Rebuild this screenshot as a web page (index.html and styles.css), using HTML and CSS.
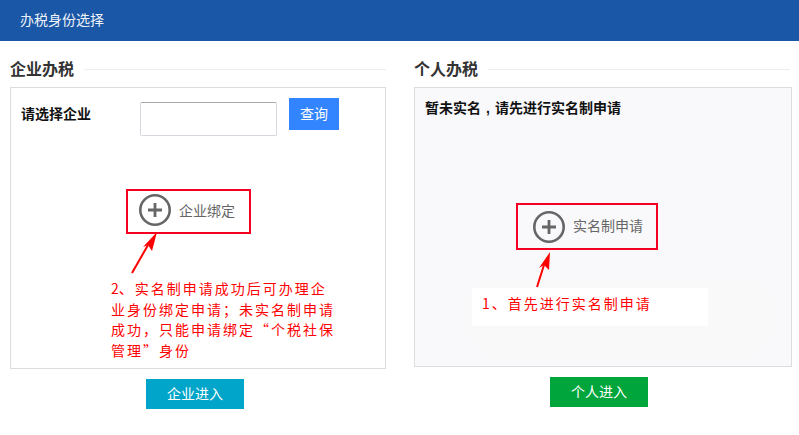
FILE: index.html
```html
<!DOCTYPE html>
<html lang="zh-CN">
<head>
    <meta charset="UTF-8">
    <title>办税身份选择</title>
    <link rel="stylesheet" href="styles.css">
</head>
<body>
    <div class="header">办税身份选择</div>

    <div class="columns">
        <!-- 企业办税 -->
        <div class="column column-company">
            <div class="section-title"><span class="title-text">企业办税</span><i class="title-line"></i></div>
            <div class="panel panel-company">
                <div class="query-row">
                    <label class="query-label">请选择企业</label>
                    <input class="query-input" type="text">
                    <div class="query-button">查询</div>
                </div>
                <div class="bind-box bind-company">
                    <svg class="plus-icon" width="34" height="34" viewBox="0 0 34 34">
                        <circle cx="17" cy="17" r="14.7" fill="none" stroke="#666" stroke-width="2.6"/>
                        <path d="M17 10v14M10 17h14" fill="none" stroke="#666" stroke-width="2.8"/>
                    </svg>
                    <span class="bind-text">企业绑定</span>
                </div>
                <svg class="arrow arrow-company" width="30" height="44" viewBox="0 0 30 44">
                    <path d="M18 14L2 42" stroke="#f00" stroke-width="2" fill="none"/>
                    <path d="M27 1L13 16L18 14L22 20Z" fill="#f00"/>
                </svg>
                <div class="note note-company"><span class="note-num">2</span>、实名制申请成功后可办理企<br>业身份绑定申请&#xFF1B;未实名制申请<br>成功&#xFF0C;只能申请绑定&#x201C;个税社保<br>管理&#x201D;身份</div>
            </div>
            <div class="enter-button enter-company">企业进入</div>
        </div>

        <!-- 个人办税 -->
        <div class="column column-person">
            <div class="section-title"><span class="title-text">个人办税</span><i class="title-line"></i></div>
            <div class="panel panel-person">
                <div class="tip">暂未实名<span class="tip-comma">,</span>请先进行实名制申请</div>
                <div class="bind-box bind-person">
                    <svg class="plus-icon" width="34" height="34" viewBox="0 0 34 34">
                        <circle cx="17" cy="17" r="14.7" fill="none" stroke="#666" stroke-width="2.6"/>
                        <path d="M17 10v14M10 17h14" fill="none" stroke="#666" stroke-width="2.8"/>
                    </svg>
                    <span class="bind-text">实名制申请</span>
                </div>
                <div class="smudge"></div>
                <svg class="arrow arrow-person" width="16" height="37" viewBox="0 0 16 37">
                    <path d="M9 14L2 36" stroke="#f00" stroke-width="2" fill="none"/>
                    <path d="M15 1L4 17L9 14L14 19Z" fill="#f00"/>
                </svg>
                <div class="note note-person"><span class="note-num">1</span>、首先进行实名制申请</div>
            </div>
            <div class="enter-button enter-person">个人进入</div>
        </div>
    </div>
</body>
</html>
```

FILE: styles.css
```css
html, body {
    height: 100%;
    margin: 0;
    overflow: hidden;
}

body {
    background-color: #fff;
    font-family: "Liberation Sans", "Noto Sans CJK SC", sans-serif;
    font-size: 14px;
    color: #333;
}

.header {
    height: 41px;
    line-height: 41px;
    padding-left: 20px;
    background-color: #1a57a6;
    color: #eef3f9;
}

.columns {
    display: flex;
    padding: 18px 7px 0 10px;
    gap: 28px;
}

.column {
    display: flex;
    flex-direction: column;
}

.column-company {
    width: 376px;
}

.column-person {
    width: 378px;
}

.section-title {
    display: flex;
    align-items: center;
    height: 21px;
    margin-bottom: 7px;
    font-size: 16px;
    font-weight: bold;
    color: #333;
}

.title-text {
    margin-bottom: 4px;
}

.title-line {
    flex: 1;
    height: 1px;
    margin-left: 10px;
    background-color: #eee;
}

.column-person .title-line {
    margin-right: 2px;
}

.panel {
    position: relative;
    box-sizing: border-box;
    border: 1px solid #ddd;
}

.panel-company {
    height: 282px;
    padding: 10px;
}

.panel-person {
    height: 280px;
    padding: 10px;
    background-color: #f9f9fb;
}

.query-row {
    display: flex;
    align-items: flex-start;
}

.query-label {
    width: 119px;
    margin-top: 6px;
    font-weight: bold;
    color: #111;
    line-height: 20px;
}

.query-input {
    box-sizing: border-box;
    width: 137px;
    height: 34px;
    margin: 4px 12px 0 0;
    padding: 0;
    border: 1px solid #d5d8de;
    border-top-color: #aaa;
    border-radius: 2px;
    background-color: #fff;
}

.query-button {
    width: 50px;
    height: 32px;
    line-height: 32px;
    text-align: center;
    background-color: #3385ff;
    color: #fff;
}

.tip {
    font-weight: bold;
    color: #111;
    line-height: 20px;
}

.tip-comma {
    display: inline-block;
    width: 14px;
    text-align: center;
}

.bind-box {
    position: absolute;
    display: flex;
    align-items: center;
    box-sizing: border-box;
    border: 2px solid #f50023;
}

.bind-company {
    left: 115px;
    top: 101px;
    width: 125px;
    height: 45px;
    padding-left: 10px;
}

.bind-company .plus-icon {
    margin-bottom: 4px;
}

.bind-person {
    left: 101px;
    top: 115px;
    width: 142px;
    height: 47px;
    padding-left: 14px;
}

.plus-icon {
    flex-shrink: 0;
    margin-right: 7px;
}

.bind-text {
    margin-bottom: 3px;
    color: #666;
}

.arrow {
    position: absolute;
}

.arrow-company {
    left: 119px;
    top: 143px;
}

.arrow-person {
    left: 120px;
    top: 163px;
}

.note {
    position: absolute;
    font-family: "Noto Sans CJK SC", sans-serif;
    font-size: 14px;
    letter-spacing: 2px;
    color: #f00;
    white-space: nowrap;
}

.note-num {
    letter-spacing: 0;
}

.note-company {
    left: 100px;
    top: 190px;
    line-height: 20.7px;
}

.note-person {
    left: 57px;
    top: 200px;
    box-sizing: border-box;
    width: 236px;
    height: 38px;
    padding: 5px 0 0 10px;
    background-color: #fff;
    line-height: 20px;
}

.note-person .note-num {
    margin-right: 2px;
}

/* leftover smudge around the pasted white note */
.smudge {
    position: absolute;
    left: 48px;
    top: 190px;
    width: 314px;
    height: 80px;
    border-radius: 40px;
    background-color: #f9f9f9;
}

.enter-button {
    align-self: flex-start;
    width: 98px;
    height: 30px;
    margin: 10px 0 0 136px;
    line-height: 30px;
    text-align: center;
    color: #fff;
}

.enter-company {
    background-color: #00a5c9;
}

.enter-person {
    background-color: #00a53c;
}
```
